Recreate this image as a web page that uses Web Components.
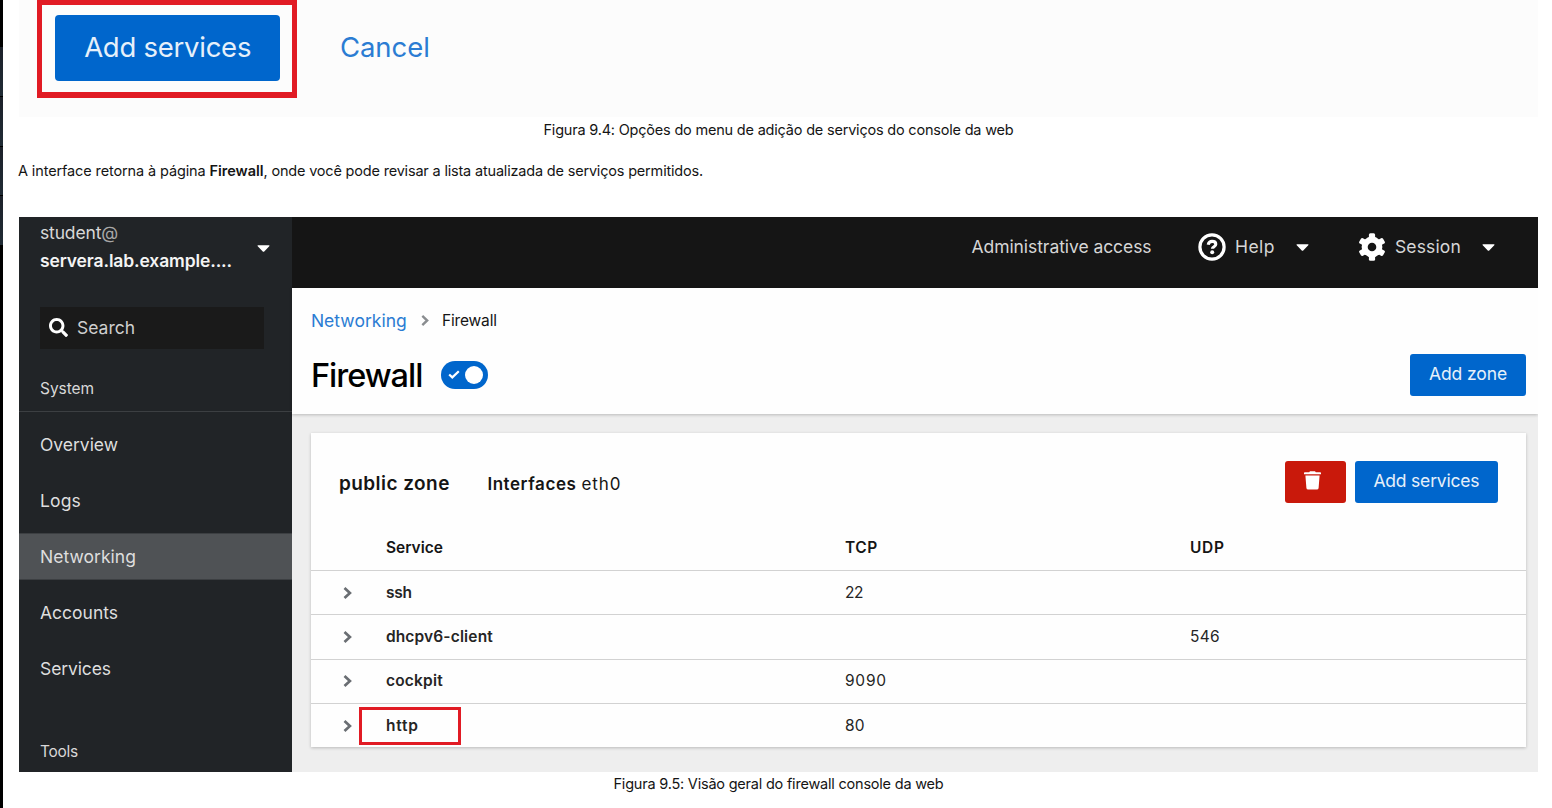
<!DOCTYPE html>
<html lang="pt-BR">
<head>
<meta charset="utf-8">
<title>Firewall – console da web</title>
<style>
html,body{margin:0;height:100%;background:#fff;overflow:hidden}
body{font-family:Inter,"Open Sans",sans-serif;color:#151515}
</style>
</head>
<body>
<course-page></course-page>
<script>
const define=(name,html,after)=>{
  const t=document.createElement('template');t.innerHTML=html;
  customElements.define(name,class extends HTMLElement{
    constructor(){super();this.attachShadow({mode:'open'}).append(t.content.cloneNode(true));}
    connectedCallback(){if(after)after.call(this,this.shadowRoot);}
  });
};

/* Text run tracked out (or in) to the width given in "w". */
define('fit-text',`<style>:host{display:inline-block;white-space:pre;line-height:24px;flex:none;font-kerning:normal}span{display:inline-block}</style><span><slot></slot></span>`,function(r){
  const s=r.querySelector('span'),w=+this.getAttribute('w');
  if(this.hasAttribute('s'))this.style.fontSize=this.getAttribute('s')+'px';
  if(this.hasAttribute('b'))this.style.fontWeight=this.getAttribute('b');
  if(w){const n=this.textContent.length,nat=s.getBoundingClientRect().width;
    s.style.letterSpacing=((w-nat)/n)+'px';this.style.width=w+'px';}
});

const icons={
 caret:['0 0 14 7','<path d="M1 .3h12q.8.3.2 1L7.8 6.5q-.8.7-1.6 0L.8 1.300q-.6-.7.2-1z" fill="currentColor"/>'],
 search:['0 0 512 512','<path fill="currentColor" d="M505 442.700 405.300 343c-4.500-4.500-10.600-7-17-7H372c27.600-35.300 44-79.700 44-128C416 93.100 322.900 0 208 0S0 93.100 0 208s93.100 208 208 208c48.300 0 92.700-16.400 128-44v16.300c0 6.400 2.500 12.500 7 17l99.700 99.700c9.400 9.400 24.600 9.400 33.900 0l28.300-28.300c9.400-9.400 9.400-24.600.1-34zM208 336c-70.700 0-128-57.200-128-128 0-70.700 57.200-128 128-128 70.700 0 128 57.200 128 128 0 70.700-57.200 128-128 128z"/>'],
 help:['0 0 28 28','<circle cx="14" cy="14" r="12.100" fill="none" stroke="currentColor" stroke-width="3.200"/><path d="M10.200 11.700q.7-3.300 3.900-3.300 3.700 0 3.700 2.900 0 1.500-1.900 2.500-1.500.8-1.500 2" fill="none" stroke="currentColor" stroke-width="3.100"/><circle cx="14.200" cy="19.300" r="2" fill="currentColor"/>'],
 gear:['0 0 28 28','<g fill="currentColor"><circle cx="14" cy="14" r="10.400"/><rect x="10.900" y=".3" width="6.200" height="27.400" rx="1.500"/><rect x="10.900" y=".3" width="6.200" height="27.400" rx="1.500" transform="rotate(60 14 14)"/><rect x="10.900" y=".3" width="6.200" height="27.400" rx="1.500" transform="rotate(120 14 14)"/></g><circle cx="14" cy="14" r="4.300" fill="#151515"/>'],
 chevron:['0 0 9 12','<path d="M1.500 1 6.900 6l-5.400 5" fill="none" stroke="currentColor" stroke-width="2.700"/>'],
 check:['0 0 12 9','<path d="M1.200 4.500 4.300 7.400 10.800 1.200" fill="none" stroke="currentColor" stroke-width="2.200"/>'],
 trash:['0 0 17 20','<path fill="currentColor" d="M0 2q0-.8.800-.8h4.400L6 .2h5l.800 1h4.400q.8 0 .8.8v1.500H0zM1.400 4.800h14.200l-1 13q-.1 1.700-1.800 1.700H4.200q-1.700 0-1.800-1.700z"/>']
};
define('ui-icon',`<style>:host{display:block;flex:none}svg{display:block;width:100%;height:100%}</style>`,function(r){
  const [vb,p]=icons[this.getAttribute('name')];
  this.style.width=this.getAttribute('w')+'px';this.style.height=this.getAttribute('h')+'px';
  r.innerHTML+=`<svg viewBox="${vb}" preserveAspectRatio="none">${p}</svg>`;
});

define('ui-button',`<style>:host{display:flex;align-items:center;justify-content:center;box-sizing:border-box;height:42px;padding-bottom:1px;background:#06c;color:#e6f0fa;border-radius:3px;flex:none}:host([danger]){background:#c9190b;color:#fff}</style><slot></slot>`);

define('page-edge',`<style>:host{display:flex;flex-direction:column;width:3px;flex:none;background:#000;padding-top:47px;gap:1px;box-sizing:border-box}
i{height:49px;background:linear-gradient(#1c212a,#202b35)}i:nth-child(n+3){height:48.500px}</style><i></i><i></i><i></i><i></i>`);

define('dialog-actions',`<style>:host{display:flex;align-items:flex-start;height:117px;background:#fcfcfc;padding-left:18.400px;box-sizing:border-box}
.mark{box-sizing:border-box;width:260px;height:97.500px;border:5px solid #e11b24;border-width:5px 5px 6px;padding:10px 12.500px 10px 13px}
ui-button{height:66px;border-radius:4px;padding:0 0 2px}
.cancel{color:#2b7cd3;margin:35px 0 0 42.500px}</style>
<div class="mark"><ui-button><fit-text s="27.500" w="167">Add services</fit-text></ui-button></div>
<fit-text class="cancel" s="27.500" w="90">Cancel</fit-text>`);

define('nav-item',`<style>:host{display:flex;align-items:center;height:47px;margin-bottom:9px;padding-left:21px;color:#dedede}:host([active]){background:#4f5255;box-shadow:inset 0 1px #3c3f42,inset 0 -1px #3c3f42}</style><slot></slot>`);

define('side-nav',`<style>:host{display:block;width:273.400px;flex:none;background:#212427;color:#d8d8d8;box-sizing:border-box}
.host{display:flex;height:90px;box-sizing:border-box;padding:4px 22px 0 21px;justify-content:space-between}
.names{display:flex;flex-direction:column;gap:4px}.names fit-text:last-child{color:#f4f4f4}
.host ui-icon{margin-top:24px;color:#fff}
.names{width:195px}
.search{display:flex;align-items:center;height:42px;width:224px;box-sizing:border-box;margin-left:21px;background:#1a1a1a;padding:0 0 1px 9px;gap:9px;color:#cfcfcf}
.search ui-icon{color:#fff}
.sec{display:flex;align-items:center;padding-left:21px;height:63px;padding-top:18px;box-sizing:border-box;border-bottom:1px solid #3c3f42;margin-bottom:9px}
.sec2{padding:39px 0 0 21px}
</style>
<div class="host"><div class="names"><fit-text s="17.500" w="78">student<span style="color:#a8a8a8">@</span></fit-text><fit-text s="17.500" b="600" w="192">servera.lab.example....</fit-text></div><ui-icon name="caret" w="13" h="7"></ui-icon></div>
<div class="search"><ui-icon name="search" w="19" h="19"></ui-icon><fit-text s="17.500" w="58">Search</fit-text></div>
<div class="sec"><fit-text s="15.500" w="54">System</fit-text></div>
<nav-item><fit-text s="17.500" w="78">Overview</fit-text></nav-item>
<nav-item><fit-text s="17.500" w="41">Logs</fit-text></nav-item>
<nav-item active><fit-text s="17.500" w="96">Networking</fit-text></nav-item>
<nav-item><fit-text s="17.500" w="78">Accounts</fit-text></nav-item>
<nav-item><fit-text s="17.500" w="71">Services</fit-text></nav-item>
<div class="sec2"><fit-text s="15.500" w="38">Tools</fit-text></div>`);

define('top-bar',`<style>:host{display:flex;align-items:center;justify-content:flex-end;height:71.300px;box-sizing:border-box;background:#151515;color:#d6d6d6;padding:0 43px 11px 0;flex:none}
ui-icon{color:#fff}.a{margin-right:46.500px}.i{margin-right:9px}.h{margin-right:21px}.c{margin-right:49px}.s{margin-right:21px}</style>
<fit-text class="a" s="17.500" w="180">Administrative access</fit-text>
<ui-icon class="i" name="help" w="28" h="28"></ui-icon><fit-text class="h" s="17.500" w="40">Help</fit-text><ui-icon class="c" name="caret" w="13" h="7"></ui-icon>
<ui-icon class="i" name="gear" w="28" h="28"></ui-icon><fit-text class="s" s="17.500" w="66">Session</fit-text><ui-icon name="caret" w="13" h="7"></ui-icon>`);

define('toggle-switch',`<style>:host{display:flex;align-items:center;justify-content:space-between;width:47px;height:28px;box-sizing:border-box;border-radius:14px;background:#06c;color:#fff;padding:0 5.500px 0 7px}b{width:18px;height:18px;border-radius:50%;background:#fff}</style><ui-icon name="check" w="12" h="9"></ui-icon><b></b>`);

define('page-header',`<style>:host{display:block;height:126px;box-sizing:border-box;background:#fefefe;padding:20.700px 12px 0 18.500px;box-shadow:0 1px 3px rgba(0,0,0,.22);flex:none;z-index:1}
.crumb{display:flex;align-items:center;height:24px}.crumb .l{color:#2b7cd3}.crumb ui-icon{margin:0 13px 0 14px;color:#8a8d90}
.row{display:flex;align-items:center;height:42px;margin-top:21px}.row .t{line-height:40px;color:#000;padding-top:2px}
toggle-switch{margin-left:19px}ui-button{margin-left:auto;width:116px}</style>
<div class="crumb"><fit-text class="l" s="17.500" w="96">Networking</fit-text><ui-icon name="chevron" w="8" h="11"></ui-icon><fit-text s="15.500" w="55">Firewall</fit-text></div>
<div class="row"><fit-text class="t" s="32.500" b="500" w="111.500">Firewall</fit-text><toggle-switch></toggle-switch><ui-button><fit-text s="17.500" w="78">Add zone</fit-text></ui-button></div>`);

define('service-row',`<style>:host{display:grid;grid-template-columns:75px 459px 345px 1fr;align-items:center;height:44.300px;box-sizing:border-box;border-top:1.300px solid #d2d2d2;position:relative;color:#252525}
ui-icon{margin-left:32px;color:#6a6e73}
:host([marked])::after{content:"";position:absolute;left:48px;top:3.200px;width:96.500px;height:31.500px;border:3px solid #e11b24}</style>
<ui-icon name="chevron" w="9" h="12"></ui-icon><slot name="name"><i></i></slot><slot name="tcp"><i></i></slot><slot name="udp"><i></i></slot>`);

define('zone-card',`<style>:host{display:block;width:1215px;height:314.500px;background:#fefefe;box-shadow:0 1px 3px rgba(0,0,0,.22)}
.top{display:flex;align-items:center;height:42px;padding:28px 28px 0 28px}
.top .z{margin-right:37.500px}.top>fit-text{padding-top:4px}.top .e{margin-left:5px}ui-button.d{width:61px;margin-left:auto;margin-right:9px}ui-button.s{width:143px}
.head{display:grid;grid-template-columns:75px 459px 345px 1fr;height:24px;margin:33.500px 0 9.500px}.d ui-icon{margin:0 5px 1px 0}</style>
<div class="top"><fit-text class="z" s="19" b="600" w="111">public zone</fit-text><fit-text s="17" b="600" w="89">Interfaces</fit-text><fit-text class="e" s="17" w="40">eth0</fit-text>
<ui-button class="d" danger><ui-icon name="trash" w="17" h="19"></ui-icon></ui-button><ui-button class="s"><fit-text s="17.500" w="106">Add services</fit-text></ui-button></div>
<div class="head"><i></i><fit-text s="15.500" b="600" w="57">Service</fit-text><fit-text s="15.500" b="600" w="33">TCP</fit-text><fit-text s="15.500" b="600" w="35">UDP</fit-text></div>
<service-row><fit-text slot="name" s="15.500" b="600" w="26">ssh</fit-text><fit-text slot="tcp" s="15.500" w="18">22</fit-text></service-row>
<service-row><fit-text slot="name" s="15.500" b="600" w="107">dhcpv6-client</fit-text><fit-text slot="udp" s="15.500" w="30">546</fit-text></service-row>
<service-row><fit-text slot="name" s="15.500" b="600" w="57">cockpit</fit-text><fit-text slot="tcp" s="15.500" w="42">9090</fit-text></service-row>
<service-row marked><fit-text slot="name" s="15.500" b="600" w="33">http</fit-text><fit-text slot="tcp" s="15.500" w="20">80</fit-text></service-row>`);

define('web-console',`<style>:host{display:flex;height:554.700px;background:#eee;overflow:hidden}
main{flex:1;display:flex;flex-direction:column;min-width:0}.body{padding:18.700px 0 0 18.500px}</style>
<side-nav></side-nav><main><top-bar></top-bar><page-header></page-header><div class="body"><zone-card></zone-card></div></main>`);

define('course-page',`<style>:host{display:flex;height:808px}
article{width:1519px;margin-left:16px}
.cap{display:flex;justify-content:center;height:24px}.first{padding-top:1px}
p{margin:17px 0 34px -1px;height:24px;display:flex;padding:0}
</style>
<page-edge></page-edge>
<article><dialog-actions></dialog-actions>
<div class="cap first"><fit-text s="14.500" w="470">Figura 9.4: Opções do menu de adição de serviços do console da web</fit-text></div>
<p><fit-text s="14.500" w="191.500">A interface retorna à página </fit-text><fit-text s="14.500" b="600" w="54">Firewall</fit-text><fit-text s="14.500" w="439.500">, onde você pode revisar a lista atualizada de serviços permitidos.</fit-text></p>
<web-console></web-console>
<div class="cap"><fit-text s="14.500" w="330">Figura 9.5: Visão geral do firewall console da web</fit-text></div>
</article>`);
</script>
</body>
</html>
